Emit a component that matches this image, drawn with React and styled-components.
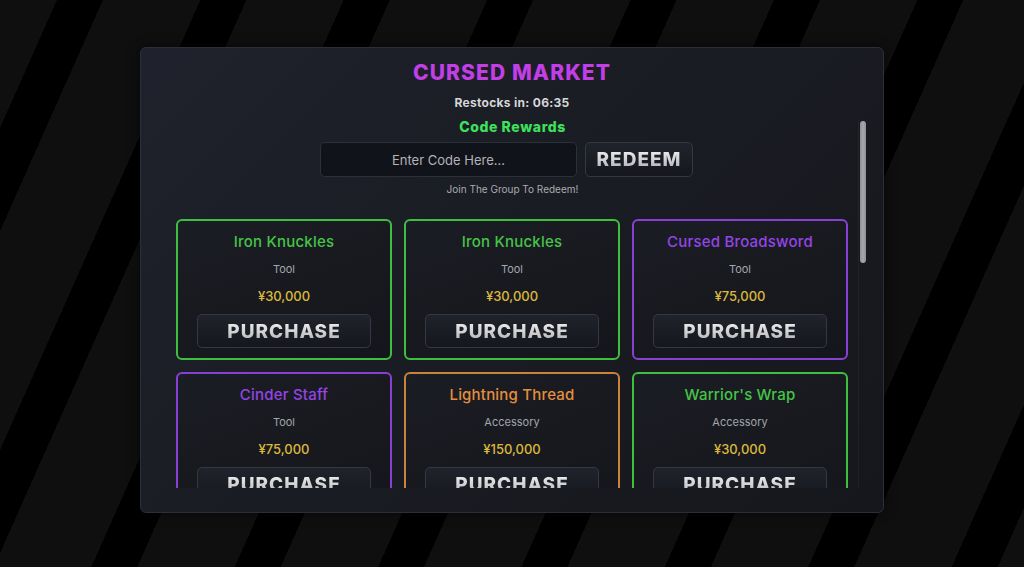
import React from "react";
import styled, { createGlobalStyle } from "styled-components";

const GlobalStyle = createGlobalStyle`
  html, body { margin: 0; padding: 0; }
  body {
    width: 1024px;
    height: 567px;
    overflow: hidden;
    font-family: Inter, "Noto Sans", sans-serif;
    background: repeating-linear-gradient(
      114deg,
      #0f0f0f 0px,
      #0f0f0f 52px,
      #000 52px,
      #000 94px,
      #0f0f0f 94px,
      #0f0f0f 131px
    );
  }
`;

const Stage = styled.div`
  height: 567px;
  display: flex;
  justify-content: center;
  align-items: flex-start;
  padding-top: 47px;
  box-sizing: border-box;
`;

const Panel = styled.div`
  width: 744px;
  height: 466px;
  box-sizing: border-box;
  border: 1px solid #2b2f39;
  border-radius: 6px;
  background: linear-gradient(135deg, #1f222c 0%, #1a1c23 50%, #16171c 100%);
  display: flex;
  flex-direction: column;
  padding: 12px 0 24px 0;
  box-shadow: 0 0 12px rgba(0, 0, 0, 0.6);
`;

const Title = styled.h1`
  margin: 0;
  text-align: center;
  font-size: 21px;
  line-height: 26px;
  font-weight: 800;
  color: #c23fe8;
  letter-spacing: 1.1px;
`;

const Restock = styled.div`
  margin-top: 9px;
  text-align: center;
  font-size: 12px;
  line-height: 16px;
  font-weight: 700;
  color: #d6d6d8;
  letter-spacing: 0.3px;
`;

const ScrollArea = styled.div`
  position: relative;
  margin-top: 7px;
  flex: 1;
  min-height: 0;
`;

const Scroller = styled.div`
  height: 100%;
  overflow-y: auto;
  scrollbar-width: none;
  padding: 0 34px 0 35px;
  &::-webkit-scrollbar {
    display: none;
  }
`;

const Track = styled.div`
  position: absolute;
  top: 0;
  bottom: 0;
  right: 16px;
  width: 8px;
  border-left: 1px solid rgba(255, 255, 255, 0.035);
  pointer-events: none;
`;

const Thumb = styled.div`
  position: absolute;
  top: 3px;
  right: 17px;
  width: 6px;
  height: 142px;
  border-radius: 3px;
  background: linear-gradient(90deg, #8f8f94 0%, #a6a6ab 50%, #8f8f94 100%);
  pointer-events: none;
`;

const CodeLabel = styled.div`
  text-align: center;
  font-size: 14px;
  line-height: 18px;
  font-weight: 800;
  color: #3ee05c;
  letter-spacing: 0.6px;
`;

const CodeRow = styled.div`
  margin-top: 6px;
  display: flex;
  justify-content: center;
  gap: 8px;
  padding-right: 12px;
`;

const CodeInput = styled.input`
  width: 257px;
  height: 35px;
  box-sizing: border-box;
  background: #11131a;
  border: 1px solid #2c303a;
  border-radius: 5px;
  color: #c0c0c4;
  text-align: center;
  font-family: inherit;
  font-size: 13px;
  outline: none;
  &::placeholder {
    color: #b4b4b8;
  }
`;

const BigButton = styled.button`
  height: ${(p) => p.$h || 35}px;
  width: ${(p) => (p.$w ? `${p.$w}px` : "auto")};
  box-sizing: border-box;
  padding: 0;
  border: 1px solid #343843;
  border-radius: 5px;
  background: linear-gradient(180deg, #20232b 0%, #15171d 100%);
  font-family: inherit;
  font-size: 19px;
  font-weight: 800;
  letter-spacing: 1px;
  cursor: pointer;
  display: flex;
  align-items: center;
  justify-content: center;
`;

const ButtonText = styled.span`
  background: linear-gradient(180deg, #f4f4f4 0%, #cfcfd2 55%, #a9a9ae 100%);
  -webkit-background-clip: text;
  background-clip: text;
  color: transparent;
`;

const JoinNote = styled.div`
  margin-top: 6px;
  text-align: center;
  font-size: 10px;
  line-height: 12px;
  color: #a9abb2;
`;

const Grid = styled.div`
  margin-top: 24px;
  display: grid;
  grid-template-columns: repeat(3, 216px);
  gap: 12px 12px;
  padding-bottom: 14px;
`;

const Card = styled.div`
  box-sizing: border-box;
  height: 141px;
  border: 2px solid ${(p) => p.$border};
  border-radius: 6px;
  background: linear-gradient(160deg, #1b1d24 0%, #15161b 100%);
  display: flex;
  flex-direction: column;
  align-items: center;
  padding: 12px 19px 9px;
`;

const ItemName = styled.div`
  font-size: 15px;
  line-height: 18px;
  font-weight: 500;
  letter-spacing: 0.2px;
  color: ${(p) => p.$color};
`;

const ItemType = styled.div`
  margin-top: 11px;
  font-size: 11px;
  line-height: 14px;
  color: #a3a5ad;
`;

const Price = styled.div`
  margin-top: 12px;
  font-size: 13px;
  line-height: 16px;
  font-weight: 500;
  color: #dcb93c;
`;

const CardButton = styled(BigButton)`
  margin-top: 10px;
  width: 100%;
`;

const rarity = {
  green: { border: "#3fbf3f", name: "#45c447" },
  purple: { border: "#8840d4", name: "#9445e6" },
  orange: { border: "#c9833c", name: "#e38f3e" },
};

const items = [
  { name: "Iron Knuckles", type: "Tool", price: "¥30,000", r: "green" },
  { name: "Iron Knuckles", type: "Tool", price: "¥30,000", r: "green" },
  { name: "Cursed Broadsword", type: "Tool", price: "¥75,000", r: "purple" },
  { name: "Cinder Staff", type: "Tool", price: "¥75,000", r: "purple" },
  { name: "Lightning Thread", type: "Accessory", price: "¥150,000", r: "orange" },
  { name: "Warrior's Wrap", type: "Accessory", price: "¥30,000", r: "green" },
  { name: "Shadow Cloak", type: "Accessory", price: "¥75,000", r: "purple" },
  { name: "Bone Charm", type: "Accessory", price: "¥30,000", r: "green" },
  { name: "Demon Blade", type: "Tool", price: "¥150,000", r: "orange" },
  { name: "Steel Gauntlets", type: "Tool", price: "¥30,000", r: "green" },
  { name: "Void Pendant", type: "Accessory", price: "¥75,000", r: "purple" },
  { name: "Blood Katana", type: "Tool", price: "¥150,000", r: "orange" },
  { name: "Leather Gloves", type: "Accessory", price: "¥30,000", r: "green" },
  { name: "Spirit Mask", type: "Accessory", price: "¥75,000", r: "purple" },
  { name: "Thunder Spear", type: "Tool", price: "¥150,000", r: "orange" },
];

export default function App() {
  return (
    <>
      <GlobalStyle />
      <Stage>
        <Panel>
          <Title>CURSED MARKET</Title>
          <Restock>Restocks in: 06:35</Restock>
          <ScrollArea>
            <Scroller>
              <CodeLabel>Code Rewards</CodeLabel>
              <CodeRow>
                <CodeInput placeholder="Enter Code Here..." />
                <BigButton $w={108}>
                  <ButtonText>REDEEM</ButtonText>
                </BigButton>
              </CodeRow>
              <JoinNote>Join The Group To Redeem!</JoinNote>
              <Grid>
                {items.map((it, i) => (
                  <Card key={i} $border={rarity[it.r].border}>
                    <ItemName $color={rarity[it.r].name}>{it.name}</ItemName>
                    <ItemType>{it.type}</ItemType>
                    <Price>{it.price}</Price>
                    <CardButton $h={34}>
                      <ButtonText>PURCHASE</ButtonText>
                    </CardButton>
                  </Card>
                ))}
              </Grid>
            </Scroller>
            <Track />
            <Thumb />
          </ScrollArea>
        </Panel>
      </Stage>
    </>
  );
}
